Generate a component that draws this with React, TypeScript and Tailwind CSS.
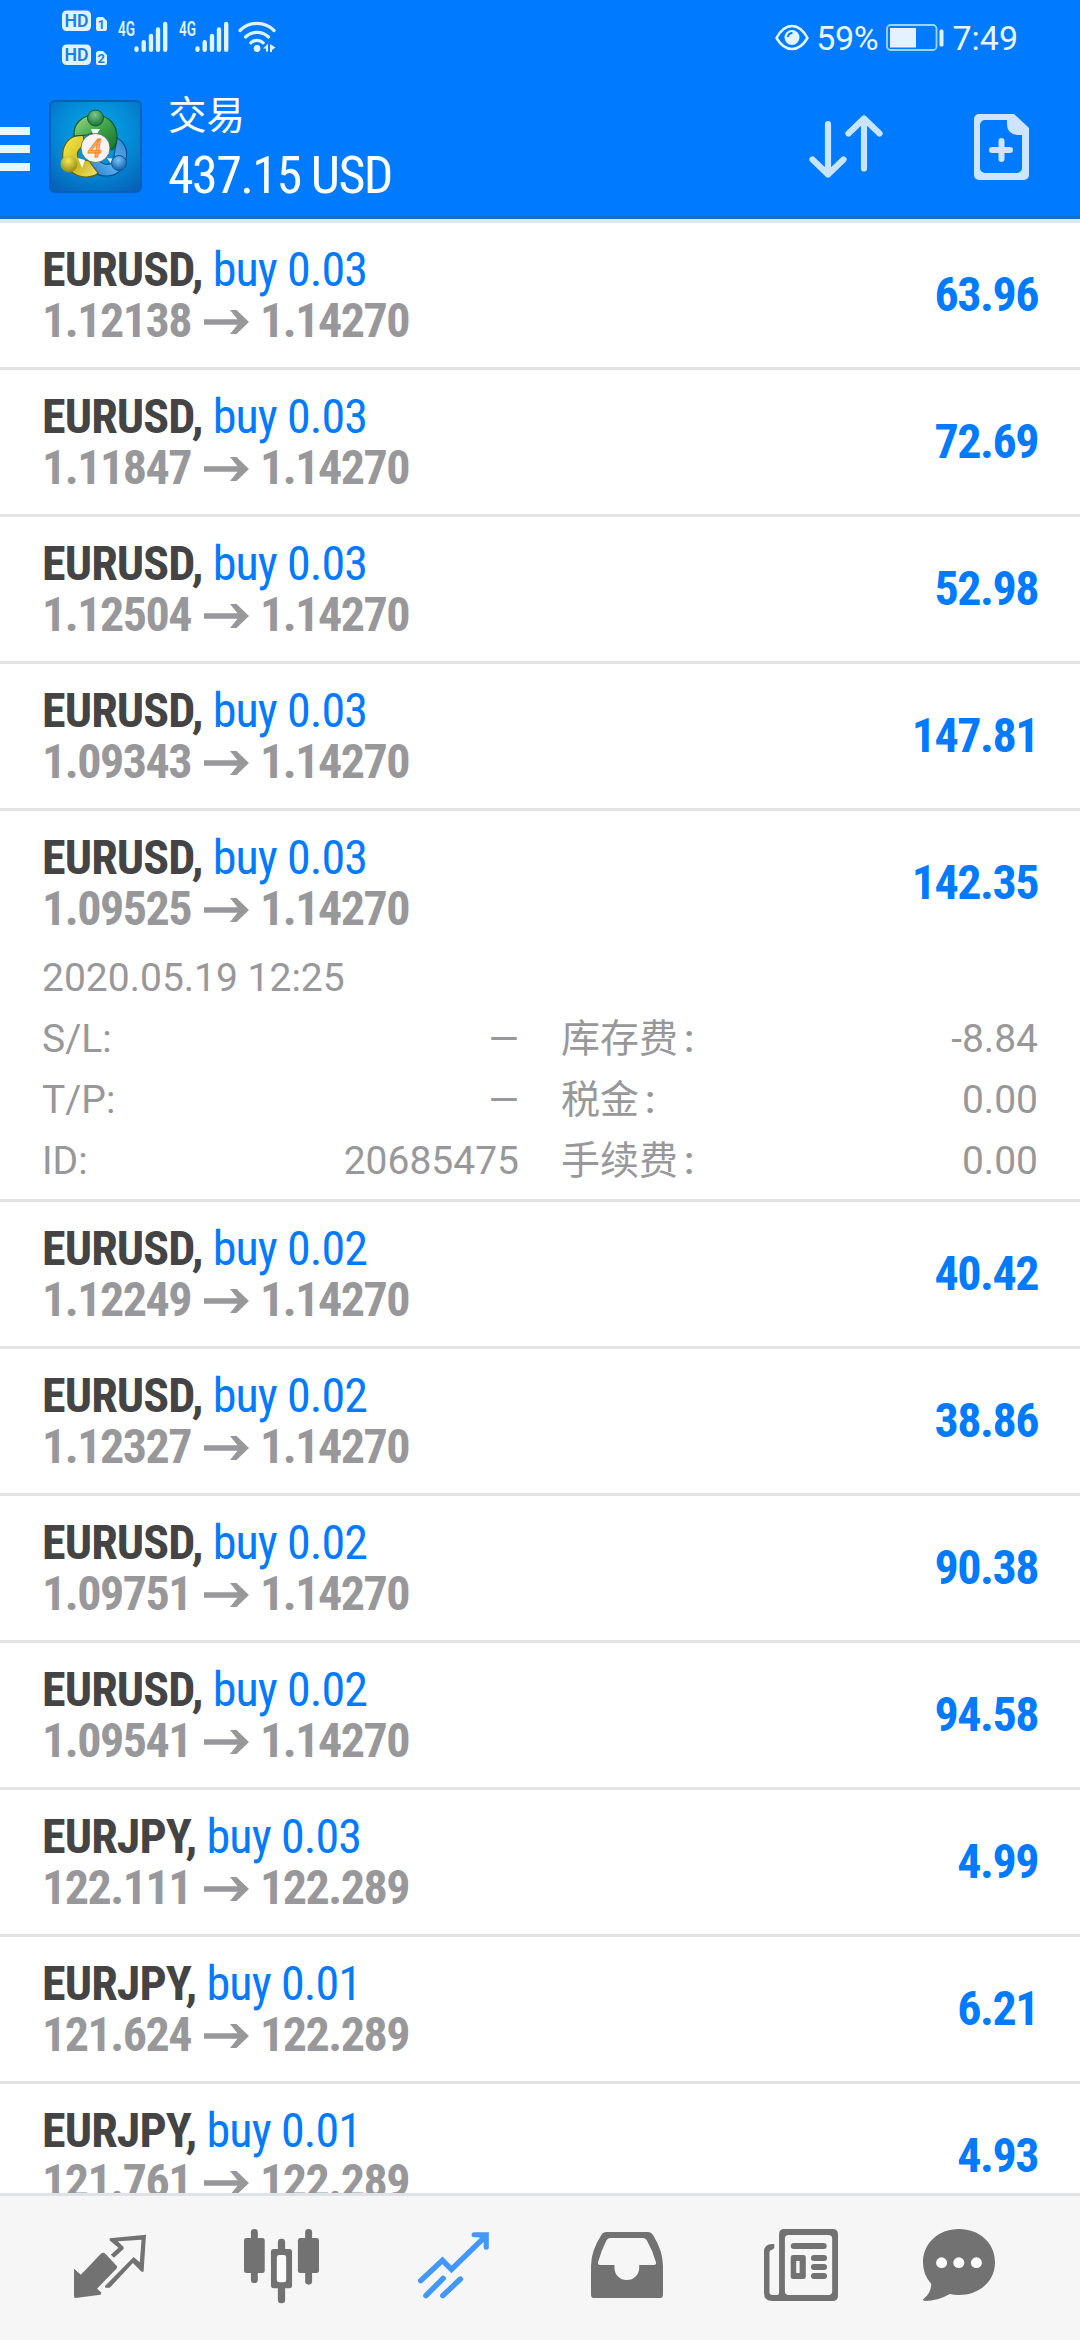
import React from 'react';

interface Position {
  symbol: string;
  volume: string;
  open: string;
  current: string;
  profit: string;
  expanded?: boolean;
}

const positions: Position[] = [
  { symbol: 'EURUSD', volume: '0.03', open: '1.12138', current: '1.14270', profit: '63.96' },
  { symbol: 'EURUSD', volume: '0.03', open: '1.11847', current: '1.14270', profit: '72.69' },
  { symbol: 'EURUSD', volume: '0.03', open: '1.12504', current: '1.14270', profit: '52.98' },
  { symbol: 'EURUSD', volume: '0.03', open: '1.09343', current: '1.14270', profit: '147.81' },
  { symbol: 'EURUSD', volume: '0.03', open: '1.09525', current: '1.14270', profit: '142.35', expanded: true },
  { symbol: 'EURUSD', volume: '0.02', open: '1.12249', current: '1.14270', profit: '40.42' },
  { symbol: 'EURUSD', volume: '0.02', open: '1.12327', current: '1.14270', profit: '38.86' },
  { symbol: 'EURUSD', volume: '0.02', open: '1.09751', current: '1.14270', profit: '90.38' },
  { symbol: 'EURUSD', volume: '0.02', open: '1.09541', current: '1.14270', profit: '94.58' },
  { symbol: 'EURJPY', volume: '0.03', open: '122.111', current: '122.289', profit: '4.99' },
  { symbol: 'EURJPY', volume: '0.01', open: '121.624', current: '122.289', profit: '6.21' },
  { symbol: 'EURJPY', volume: '0.01', open: '121.761', current: '122.289', profit: '4.93' },
];

const details = [
  { label: 'S/L:', value: '—', label2: '库存费', value2: '-8.84' },
  { label: 'T/P:', value: '—', label2: '税金', value2: '0.00' },
  { label: 'ID:', value: '20685475', label2: '手续费', value2: '0.00' },
];

const HdBadge: React.FC<{ sim: string }> = ({ sim }) => (
  <svg width="46" height="22" viewBox="0 0 46 22">
    <rect x="0" y="0.5" width="29" height="20.5" rx="4.5" fill="#dff3ff" />
    <text x="14.5" y="16.8" textAnchor="middle" fontFamily="Roboto" fontWeight="600" fontSize="17.5" textLength="24" lengthAdjust="spacingAndGlyphs" fill="#1a7fe6">HD</text>
    <path d="M34 9.5a2.5 2.5 0 0 1 2.5-2.5H41l4 4v8a2 2 0 0 1-2 2h-7a2 2 0 0 1-2-2z" fill="#dff3ff" />
    <text x="39.3" y="19" textAnchor="middle" fontFamily="Roboto" fontWeight="700" fontSize="13" fill="#1a7fe6">{sim}</text>
  </svg>
);

const Signal = () => (
  <svg width="50" height="38" viewBox="0 -4 50 38">
    <text x="0" y="16.5" fontFamily="Roboto" fontWeight="600" fontSize="20" textLength="17" lengthAdjust="spacingAndGlyphs" fill="#dff3ff">4G</text>
    <g stroke="#dff3ff" strokeWidth="4.400" strokeLinecap="round">
      <path d="M18.500 29.500v1.300M25.700 23.200v7.600M33 17v13.800M40 10.500v20.300M47.200 5v25.800" />
    </g>
  </svg>
);

const Wifi = () => (
  <svg width="38" height="38" viewBox="0 -4 38 38">
    <g fill="none" stroke="#dff3ff" strokeWidth="3.200" strokeLinecap="round">
      <path d="M2 11.500a24 24 0 0 1 34 0" />
      <path d="M7.500 18a16.500 16.500 0 0 1 23 0" />
      <path d="M12.800 23.800a9 9 0 0 1 12.400 0" />
    </g>
    <circle cx="19" cy="29.500" r="3.400" fill="#dff3ff" />
    <path d="M25 29.500l5-5v8h-2v-3zM32 25l5.500 3.500L34 31v2h-2z" fill="#dff3ff" />
  </svg>
);

const Eye = () => (
  <svg width="34" height="28" viewBox="0 0 34 28">
    <path d="M1.500 14Q8 2 17 2t15.500 12Q26 25 17 25T1.500 14z" fill="none" stroke="#e4f6ff" strokeWidth="2.600" strokeLinejoin="round" />
    <circle cx="17" cy="13.500" r="7.500" fill="#e4f6ff" />
    <path d="M13 13a4.500 4.500 0 0 1 4.500-4" fill="none" stroke="#007aff" strokeWidth="2" />
  </svg>
);

const Battery = () => (
  <svg width="58" height="28" viewBox="0 0 58 28">
    <rect x="1" y="1" width="49.500" height="25" rx="3.500" fill="none" stroke="#9fd3ff" strokeWidth="1.800" />
    <rect x="4" y="4" width="26" height="19.500" fill="#e4f2ff" />
    <rect x="53.500" y="5.500" width="4" height="17" rx="1.500" fill="#dff3ff" />
  </svg>
);

const AppLogo = () => (
  <svg width="93" height="93" viewBox="0 0 93 93">
    <defs>
      <radialGradient id="bg" cx="50%" cy="35%" r="75%">
        <stop offset="0" stopColor="#08a9e6" />
        <stop offset="0.6" stopColor="#0486d4" />
        <stop offset="1" stopColor="#0563b8" />
      </radialGradient>
      <linearGradient id="green" x1="0" y1="0" x2="1" y2="1">
        <stop offset="0" stopColor="#a6dc8a" />
        <stop offset="0.5" stopColor="#3fa548" />
        <stop offset="1" stopColor="#14702e" />
      </linearGradient>
      <linearGradient id="yellow" x1="0" y1="0" x2="1" y2="1">
        <stop offset="0" stopColor="#f7ee4e" />
        <stop offset="0.6" stopColor="#cdbb1f" />
        <stop offset="1" stopColor="#f0e67c" />
      </linearGradient>
      <linearGradient id="blue" x1="1" y1="0" x2="0" y2="1">
        <stop offset="0" stopColor="#2f84d2" />
        <stop offset="0.5" stopColor="#5cb2ee" />
        <stop offset="1" stopColor="#2277cc" />
      </linearGradient>
      <radialGradient id="greenBall" cx="45%" cy="30%" r="70%">
        <stop offset="0" stopColor="#7cc98a" />
        <stop offset="1" stopColor="#17713a" />
      </radialGradient>
      <radialGradient id="yellowBall" cx="45%" cy="30%" r="70%">
        <stop offset="0" stopColor="#f3ea5a" />
        <stop offset="1" stopColor="#8f8a12" />
      </radialGradient>
      <radialGradient id="blueBall" cx="45%" cy="30%" r="70%">
        <stop offset="0" stopColor="#7cc4f2" />
        <stop offset="1" stopColor="#0b62b0" />
      </radialGradient>
    </defs>
    <rect x="1" y="1" width="91" height="91" rx="5" fill="url(#bg)" stroke="#0560bd" strokeWidth="2" />
    <path d="M68 38c8 4 11 13 9 21-2 10-9 17-19 17-9 0-17-4-21-13l12-4c4 6 11 7 15 3z" fill="url(#blue)" stroke="#0c4f8f" strokeWidth="1.200" />
    <path d="M34 35c-10-1-18 6-20 16-1 6 0 10 3 13 3 8 11 13 20 13 5 0 9-1 12-4l-9-12-10-2c-4-5 0-12 6-13z" fill="url(#yellow)" stroke="#5d6410" strokeWidth="1.200" />
    <path d="M25 36c-1-12 8-21 21-21 14 0 22 10 22 22 0 6-2 10-5 13l-9-9-7-9-9 3z" fill="url(#green)" stroke="#0d5a2a" strokeWidth="1.200" />
    <path d="M42 29h9l-3 5h-4zM29 58l7 2-3 8zM58 58l8 1-3 6z" fill="#f3fbff" />
    <circle cx="46.500" cy="18" r="8" fill="url(#greenBall)" stroke="#12602f" />
    <circle cx="20" cy="64" r="8.500" fill="url(#yellowBall)" />
    <circle cx="70" cy="63" r="7.500" fill="url(#blueBall)" stroke="#0b549a" />
    <circle cx="46.500" cy="48" r="14.500" fill="#f7f3f2" stroke="#4d6b4a" strokeWidth="0.800" />
    <text x="46" y="56.500" textAnchor="middle" fontFamily="Roboto" fontStyle="italic" fontWeight="500" fontSize="25" fill="#ffb066" stroke="#f28322" strokeWidth="0.800">4</text>
  </svg>
);

const SortArrows = () => (
  <svg width="74" height="66" viewBox="0 0 74 66" fill="none" stroke="#c9e4ff" strokeWidth="6.200" strokeLinecap="round" strokeLinejoin="round">
    <path d="M19 10v49M3.500 45.500L19 60.500l15.500-15" />
    <path d="M55 54.500V6M39.500 19.500L55 4.500l15.500 15" />
  </svg>
);

const NewOrder = () => (
  <svg width="55" height="66" viewBox="0 0 55 66">
    <path fillRule="evenodd" d="M5 0h35l15 14v47a5 5 0 0 1-5 5H5a5 5 0 0 1-5-5V5a5 5 0 0 1 5-5zM11 6a5 5 0 0 0-5 5v43a5 5 0 0 0 5 5h32a5 5 0 0 0 5-5V21h-5a10 10 0 0 1-10-10V6z" fill="#cfe4ff" />
    <path d="M27.500 27v18M18 36h18" stroke="#cfe4ff" strokeWidth="6" strokeLinecap="round" />
  </svg>
);

const PriceArrow = () => (
  <svg width="45" height="26" viewBox="0 0 45 26">
    <path d="M0 10.200h33.500L26 1h6.500L45 13 32.500 25H26l7.500-9.200H0z" fill="#98989b" />
  </svg>
);

const PositionRow: React.FC<{ item: Position }> = ({ item }) => (
  <div className="shrink-0 border-b-[3px] border-[#e3e3e4]">
    <div className={`flex items-center justify-between pr-[42px] pl-[42px] font-['Roboto_Condensed','Roboto',sans-serif] text-[48px] leading-[51px] [font-stretch:75%] ${item.expanded ? 'h-[136px]' : 'h-[144px]'}`}>
      <div className={item.expanded ? 'pt-2' : ''}>
        <div className="tracking-[-0.9px] whitespace-pre text-[#007aff]">
          <span className="font-bold text-[#444]">{item.symbol}, </span>buy {item.volume}
        </div>
        <div className="flex items-center font-bold tracking-[-1.5px] text-[#98989b]">
          {item.open}
          <span className="mt-0.5 mr-[11px] ml-[13px]"><PriceArrow /></span>
          {item.current}
        </div>
      </div>
      <div className={`font-bold tracking-[-1.5px] text-[#007aff] ${item.expanded ? 'pt-1.5' : 'pb-0.5'}`}>{item.profit}</div>
    </div>
    {item.expanded && (
      <div className="pt-px pr-[42px] pb-[7px] pl-[42px] font-['Roboto','Noto_Sans_CJK_SC',sans-serif] text-[39px] leading-[61px] text-[#98989a]">
        <div>2020.05.19 12:25</div>
        {details.map((row) => (
          <div key={row.label} className="flex h-[61px]">
            <div className="flex w-[477px] justify-between">
              <span>{row.label}</span>
              <span>{row.value}</span>
            </div>
            <div className="ml-[42px] flex flex-1 justify-between">
              <span>{row.label2}<span className="ml-[6px] font-medium">:</span></span>
              <span>{row.value2}</span>
            </div>
          </div>
        ))}
      </div>
    )}
  </div>
);

const BottomNav = () => (
  <nav className="flex h-[147px] shrink-0 border-t-[3px] border-[#e1e2e3] bg-[#f6f6f6] pt-8 pl-[74px]">
    <svg width="72" height="76" viewBox="215 444 209 228" preserveAspectRatio="none" fill="#727272">
      <path d="M215 566l20 18 58-63q7-5 13 0l34 38q1 4-2 7l-56 60 13 12-3 6-73 10q-4 0-4-5z" />
      <path fillRule="evenodd" d="M319 475l105-11-7 111h-6l-25-26-67 74h-13l-1-5 83-87 18 16 5-68-69 5 17 17v6l-28 26-9-9 22-21-26-22z" />
    </svg>
    <svg className="ml-[98px]" width="75" height="76" viewBox="709 444 217 228" preserveAspectRatio="none" fill="#727272">
      <rect x="709" y="474" width="60" height="105" rx="7" />
      <rect x="729" y="447" width="20" height="162" rx="10" />
      <rect x="865" y="474" width="61" height="105" rx="7" />
      <rect x="886" y="447" width="20" height="167" rx="10" />
      <rect x="807" y="476" width="21" height="50" rx="10" />
      <rect x="807" y="610" width="21" height="60" rx="10" />
      <rect x="787" y="507" width="61" height="118" rx="8" />
      <rect x="804" y="525" width="27" height="82" rx="7" fill="#fbfbfb" />
    </svg>
    <svg className="ml-[99px]" width="71" height="76" viewBox="1214 444 206 228" preserveAspectRatio="none" fill="none" stroke="#4298f8" strokeWidth="16" strokeLinecap="round" strokeLinejoin="miter">
      <path d="M1222 602l63-61 26 27 95-95" />
      <path d="M1237 647l50-52M1286 647l51-50" />
      <path d="M1377 464h35v38" strokeWidth="15" />
      <path d="M1390 470h22v24z" fill="#4298f8" stroke="none" />
    </svg>
    <svg className="ml-[102px]" width="72" height="76" viewBox="147 444 209 228" preserveAspectRatio="none" fill="#727272">
      <path fillRule="evenodd" d="M192 456h121q9 0 14 9 29 48 29 93v86q0 10-10 10H157q-10 0-10-10v-86q0-45 30-93 5-9 15-9zM204 474q-9 0-13 9-15 30-24 65 0 7 6 7h42v8c0 21 16 37 36 37s36-16 36-37v-8h43q6 0 6-7-9-35-26-65-4-9-13-9z" />
    </svg>
    <svg className="ml-[101px]" width="74" height="76" viewBox="647 444 216 228" preserveAspectRatio="none" fill="#727272">
      <path fillRule="evenodd" d="M706 447h141q16 0 16 16v184q0 16-16 16H671q-24 0-24-24V516q0-24 24-24h6v12l-7 6q-7 0-7 7v119q0 9 9 9h13q6 0 6-6V463q0-16 15-16zM719 465q-11 0-11 11v158q0 11 11 11h116q11 0 11-11V476q0-11-11-11z" />
      <path d="M734 498h87M793 534h29M793 561h29M793 588h29" stroke="#727272" strokeWidth="18" strokeLinecap="round" />
      <path fillRule="evenodd" d="M732 525h30q7 0 7 7v58q0 7-7 7h-30q-7 0-7-7v-58q0-7 7-7zM741 543v36h10v-36z" />
    </svg>
    <svg className="ml-[85px]" width="72" height="76" viewBox="1109 444 209 228" preserveAspectRatio="none" fill="#727272">
      <path d="M1213 447c60 0 105 42 105 100s-46 98-105 98q-14 0-26-3-36 21-72 21-10-2-4-7 21-16 22-44-24-27-24-65c0-56 44-100 104-100z" />
      <circle cx="1163" cy="548" r="16" fill="#fff" />
      <circle cx="1213" cy="548" r="16" fill="#fff" />
      <circle cx="1264" cy="548" r="16" fill="#fff" />
    </svg>
  </nav>
);

const App: React.FC = () => (
  <div className="flex h-[2340px] w-[1080px] flex-col overflow-hidden bg-white">
    <header className="h-[219px] shrink-0 border-b-[3px] border-[#1a6bc4] bg-[#007aff]">
      <div className="flex h-[76px] justify-between pr-[62px] pl-[62px]">
        <div className="flex">
          <div className="flex flex-col gap-3 pt-[10px]">
            <HdBadge sim="1" />
            <HdBadge sim="2" />
          </div>
          <div className="flex gap-[11px] pt-[15px] pl-[10px]">
            <Signal />
            <Signal />
            <span className="-ml-[2px]"><Wifi /></span>
          </div>
        </div>
        <div className="flex h-[76px] items-center font-['Roboto',sans-serif] text-[34px] text-[#e8f7ff]">
          <Eye />
          <span className="ml-[7px] tracking-[-0.3px]">59%</span>
          <span className="ml-2"><Battery /></span>
          <span className="ml-2">7:49</span>
        </div>
      </div>
      <div className="flex">
        <div className="flex w-[30px] flex-col gap-[10px] pt-[51px]">
          <div className="h-2 bg-[#e6f8ff]" />
          <div className="h-2 bg-[#e6f8ff]" />
          <div className="h-2 bg-[#e6f8ff]" />
        </div>
        <div className="mt-6 ml-[19px]"><AppLogo /></div>
        <div className="ml-[26px] flex-1 text-white">
          <div className="mt-[11px] font-['Noto_Sans_CJK_SC',sans-serif] text-[38.5px] leading-[50px]">交易</div>
          <div className="mt-[4px] font-['Roboto_Condensed','Roboto',sans-serif] text-[52px] leading-[70px] tracking-[-1.6px] [font-stretch:75%]">437.15 USD</div>
        </div>
        <div className="mt-[38px] flex gap-[91px] pr-[51px]">
          <SortArrows />
          <NewOrder />
        </div>
      </div>
    </header>
    <div className="h-1 shrink-0 bg-[#dce9ee]" />
    <main className="flex min-h-0 flex-1 flex-col overflow-hidden">
      {positions.map((item, i) => (
        <PositionRow key={i} item={item} />
      ))}
    </main>
    <BottomNav />
  </div>
);

export default App;
